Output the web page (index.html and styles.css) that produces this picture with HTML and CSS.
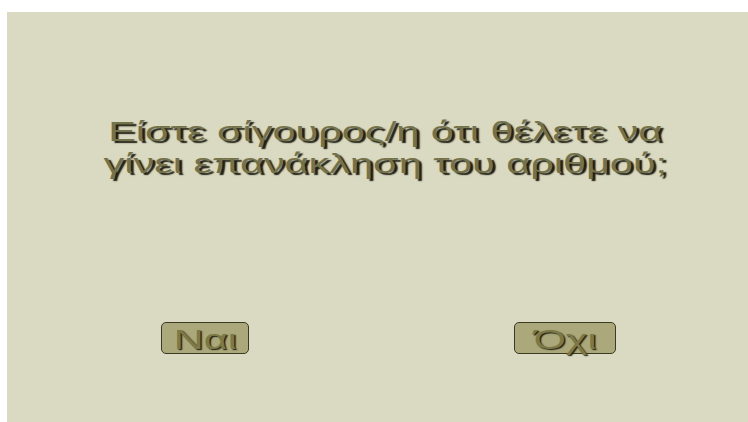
FILE: index.html
```html
<!DOCTYPE html>
<html lang="el">
<head>
<meta charset="utf-8">
<title>Επανάκληση</title>
<link rel="stylesheet" href="styles.css">
</head>
<body>
<main class="panel">
  <h1 class="question">
    <span class="line">Είστε σίγουρος/η ότι θέλετε να</span>
    <span class="line">γίνει επανάκληση του αριθμού;</span>
  </h1>
  <div class="actions">
    <button class="btn btn-yes" type="button"><span class="label">Ναι</span></button>
    <button class="btn btn-no" type="button"><span class="label">Όχι</span></button>
  </div>
</main>
</body>
</html>
```

FILE: styles.css
```css
html, body {
  margin: 0;
  padding: 0;
  background: #ffffff;
}

.panel {
  margin: 12px 0 0 7px;
  height: 410px;
  background: #dad9c2;
  box-sizing: border-box;
  padding-top: 104px;
  display: flex;
  flex-direction: column;
}

/* wide, horizontally stretched caption */
.question {
  margin: 0;
  padding-left: 16px;
  display: flex;
  flex-direction: column;
  align-items: center;
  font-family: "Liberation Sans", Arial, sans-serif;
  font-weight: normal;
  font-size: 28px;
  line-height: 32px;
  color: #74724a;
  text-shadow: 2px 2px 1px #1e1d10;
}

.line {
  display: block;
  white-space: nowrap;
  transform: scaleX(1.48);
}

.actions {
  margin-top: 142px;
  display: flex;
  align-items: center;
}

.btn {
  font-family: "Liberation Sans", Arial, sans-serif;
  font-size: 28px;
  line-height: 1;
  color: #7c7946;
  text-shadow: 1px 1px 1px #1e1d10;
  background: #aba87c;
  border: 1px solid #3b3a24;
  border-radius: 5px;
  padding: 0;
  height: 32px;
  box-sizing: border-box;
  display: flex;
  align-items: center;
  justify-content: center;
}

.label {
  display: block;
  white-space: nowrap;
  transform: scaleX(1.48);
  padding-top: 3px;
}

.btn-yes {
  width: 88px;
  margin-left: 154px;
}

.btn-no {
  width: 102px;
  margin-left: 265px;
}
```
